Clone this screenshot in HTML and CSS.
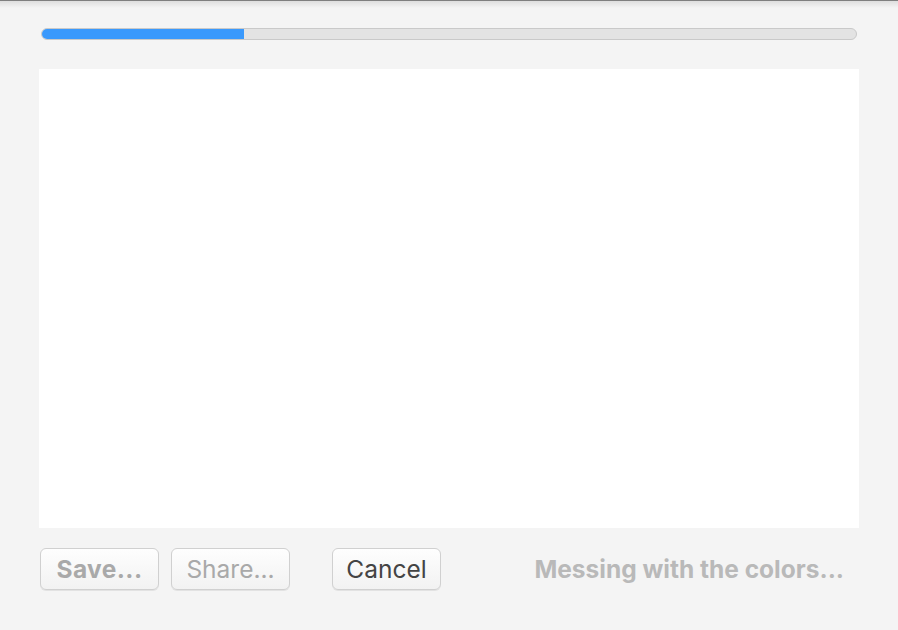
FILE: index.html
```html
<!DOCTYPE html>
<html lang="en">
<head>
  <meta charset="UTF-8" />
  <title>Colors</title>
  <link rel="stylesheet" href="styles.css">
</head>
<body>

<div class="topshade"></div>

<div class="panel">
  <div class="progress">
    <div class="progress-fill" style="width: 24.9%"></div>
  </div>

  <div class="canvas"></div>

  <div class="actions">
    <button class="btn btn-save" disabled>Save...</button>
    <button class="btn btn-share" disabled>Share...</button>
    <button class="btn btn-cancel">Cancel</button>
    <span class="status">Messing with the colors...</span>
  </div>
</div>

</body>
</html>
```

FILE: styles.css
```css
* { box-sizing: border-box; }
body {
  margin: 0;
  background: #f4f4f4;
  font-family: Inter, 'Liberation Sans', sans-serif;
  color: #333;
  height: 630px;
  overflow: hidden;
}
.topshade {
  height: 8px;
  border-top: 1px solid #7f7f7f;
  background: linear-gradient(to bottom, #dedede, #f4f4f4);
}
.panel {
  padding: 20px 39px 0 39px;
}
.progress {
  margin: 0 2px;
  height: 12px;
  background: #e3e3e3;
  border: 1px solid #c9c9c9;
  border-radius: 6px;
  overflow: hidden;
}
.progress-fill {
  background: #3a99fc;
  margin: -1px 0 0 -1px;
  height: 12px;
  border-radius: 6px 0 0 6px;
}
.canvas {
  margin-top: 29px;
  height: 459px;
  background: #fff;
}
.actions {
  display: flex;
  align-items: center;
  margin-top: 20px;
  padding-left: 1px;
}
.btn {
  height: 42px;
  padding: 0 10px;
  background: linear-gradient(to bottom, #fefefe, #f2f2f2);
  border: 1px solid #d0d0d0;
  border-radius: 6px;
  box-shadow: 0 1px 0 #e2e2e2;
  font-family: Inter, 'Liberation Sans', sans-serif;
  font-size: 24.5px;
  color: #a9a9a9;
  cursor: pointer;
}
.btn-save {
  width: 119px;
  font-weight: bold;
  letter-spacing: 0.4px;
}
.btn-share {
  width: 119px;
  margin-left: 12px;
}
.btn-cancel {
  width: 109px;
  margin-left: 42px;
  color: #444;
}
.status {
  margin-left: auto;
  margin-right: 15px;
  font-size: 24.5px;
  font-weight: bold;
  color: #b9b9b9;
}
```
